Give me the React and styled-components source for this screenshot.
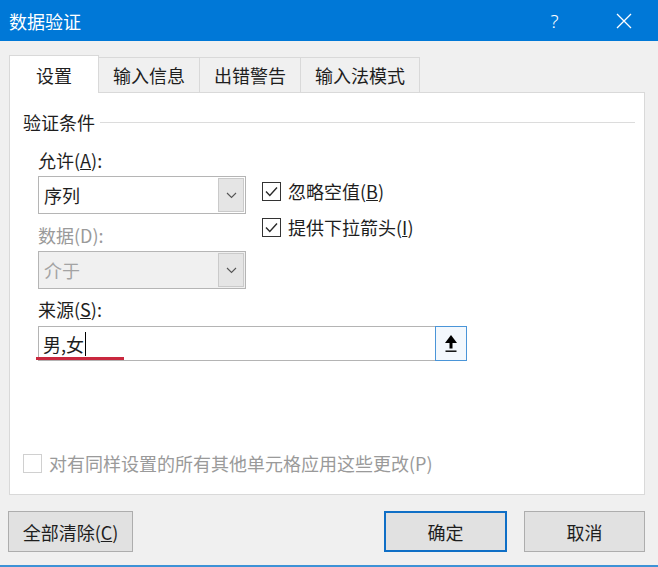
import React from 'react';
import styled, { createGlobalStyle } from 'styled-components';

const GlobalStyle = createGlobalStyle`
  html, body {
    margin: 0;
    padding: 0;
  }
  body {
    background: #f0f0f0;
    font-family: "Noto Sans CJK SC", "Noto Sans", sans-serif;
  }
`;

const Window = styled.div`
  width: 658px;
  height: 567px;
  box-sizing: border-box;
  display: flex;
  flex-direction: column;
  background: #f0f0f0;
  border-bottom: 2px solid #3d92d6;
  color: #1e1e1e;
  font-size: 18px;
  overflow: hidden;
`;

const TitleBar = styled.div`
  height: 41px;
  flex: none;
  display: flex;
  align-items: center;
  padding-left: 9px;
  background: #0078d7;
  color: #fff;
`;

const Title = styled.div`
  flex: 1;
  font-size: 18px;
  line-height: 24px;
`;

const TitleButton = styled.div`
  width: 69px;
  height: 41px;
  display: flex;
  align-items: center;
  justify-content: center;
  font-family: "Noto Sans", sans-serif;
  font-weight: 300;
  font-size: 19px;
`;

const TabStrip = styled.div`
  position: relative;
  z-index: 1;
  height: 37px;
  flex: none;
  display: flex;
  align-items: flex-end;
  margin: 14px 13px 0 9px;
`;

const Tab = styled.div`
  box-sizing: border-box;
  height: ${p => (p.$active ? '38px' : '35px')};
  margin-bottom: ${p => (p.$active ? '-1px' : '0')};
  padding: 0 ${p => (p.$active ? '26px' : '14px')};
  display: flex;
  align-items: center;
  background: ${p => (p.$active ? '#fff' : '#f0f0f0')};
  border-top: 1px solid #d9d9d9;
  border-right: 1px solid #d9d9d9;
  border-left: ${p => (p.$active ? '1px solid #d9d9d9' : 'none')};
  line-height: 24px;
  white-space: nowrap;
`;

const Panel = styled.div`
  flex: 1;
  min-height: 0;
  display: flex;
  flex-direction: column;
  margin: 0 13px 0 9px;
  padding: 17px 9px 19px 13px;
  background: #fff;
  border: 1px solid #d9d9d9;
`;

const GroupHeader = styled.div`
  display: flex;
  align-items: center;
  gap: 5px;
  line-height: 24px;
`;

const GroupRule = styled.div`
  flex: 1;
  height: 1px;
  background: #dcdcdc;
`;

const Form = styled.div`
  display: flex;
  flex-direction: column;
  margin-left: 15px;
`;

const Label = styled.div`
  line-height: 24px;
  margin-top: ${p => p.$gap}px;
  color: ${p => (p.$disabled ? '#9a9a9a' : '#1e1e1e')};
`;

const Row = styled.div`
  display: flex;
  margin-top: 4px;
`;

const LeftColumn = styled.div`
  width: 208px;
  display: flex;
  flex-direction: column;
`;

const CheckColumn = styled.div`
  display: flex;
  flex-direction: column;
  gap: 12px;
  margin-left: 16px;
  padding-top: 3px;
`;

const Select = styled.div`
  box-sizing: border-box;
  height: 38px;
  margin-top: ${p => p.$gap || 0}px;
  display: flex;
  align-items: center;
  padding: 1px;
  border: 1px solid #b5b5b5;
  background: ${p => (p.$disabled ? '#f0f0f0' : '#fff')};
  color: ${p => (p.$disabled ? '#a3a3a3' : '#1e1e1e')};
`;

const SelectValue = styled.span`
  flex: 1;
  padding-left: 4px;
  line-height: 24px;
`;

const DropButton = styled.span`
  box-sizing: border-box;
  width: 26px;
  align-self: stretch;
  display: flex;
  align-items: center;
  justify-content: center;
  background: #e5e5e5;
  border: 1px solid #cacaca;
`;

const CheckRow = styled.label`
  display: flex;
  align-items: center;
  gap: 7px;
  line-height: 24px;
  white-space: nowrap;
  color: ${p => (p.$disabled ? '#9a9a9a' : '#1e1e1e')};
`;

const CheckBox = styled.span`
  box-sizing: border-box;
  width: 19px;
  height: 19px;
  flex: none;
  display: flex;
  align-items: center;
  justify-content: center;
  background: #fff;
  border: 1px solid ${p => (p.$disabled ? '#d0d0d0' : '#333')};
`;

const SourceField = styled.div`
  position: relative;
  box-sizing: border-box;
  width: 429px;
  height: 35px;
  margin-top: 5px;
  display: flex;
  align-items: center;
  background: #fff;
  border: 1px solid #b4b4b4;
`;

const SourceText = styled.span`
  flex: 1;
  display: flex;
  align-items: center;
  padding-left: 4px;
  line-height: 24px;
`;

const Caret = styled.span`
  width: 1px;
  height: 24px;
  margin-left: 1px;
  background: #000;
`;

const RefButton = styled.span`
  box-sizing: border-box;
  width: 32px;
  align-self: stretch;
  margin: -1px -1px -1px 0;
  display: flex;
  align-items: center;
  justify-content: center;
  background: #f3f8fd;
  border: 1px solid #4a95d8;
`;

const RedMark = styled.span`
  position: absolute;
  left: -3px;
  bottom: 0;
  width: 88px;
  height: 3px;
  background: #c9283e;
`;

const Spacer = styled.div`
  flex: 1;
`;

const Footer = styled.div`
  flex: none;
  display: flex;
  padding: 16px 13px 13px 8px;
`;

const Button = styled.button`
  box-sizing: border-box;
  width: ${p => p.$width}px;
  height: 41px;
  margin-left: ${p => (p.$push ? 'auto' : p.$gap ? `${p.$gap}px` : '0')};
  padding: 0;
  font: inherit;
  font-size: 18px;
  color: #1e1e1e;
  background: #e1e1e1;
  border: ${p => (p.$primary ? '2px solid #0f6fc6' : '1px solid #adadad')};
`;

const Chevron = () => (
  <svg width="11" height="7" viewBox="0 0 11 7">
    <polyline points="1,1 5.5,5.5 10,1" fill="none" stroke="#555" strokeWidth="1.1" />
  </svg>
);

const Tick = () => (
  <svg width="15" height="15" viewBox="0 0 15 15">
    <polyline points="2,7.5 5.8,11.5 13,3.5" fill="none" stroke="#2a2a2a" strokeWidth="1.4" />
  </svg>
);

const CloseIcon = () => (
  <svg width="16" height="16" viewBox="0 0 16 16">
    <path d="M1 1 L15 15 M15 1 L1 15" stroke="#fff" strokeWidth="1.3" />
  </svg>
);

// collapse-dialog button: arrow pointing up onto a bar
const CollapseIcon = () => (
  <svg width="16" height="20" viewBox="0 0 16 20">
    <polygon points="8,1 14,9 2,9" fill="#000" />
    <rect x="6.5" y="8.5" width="3" height="6" fill="#000" />
    <rect x="2.5" y="16.5" width="11" height="1.4" fill="#000" />
  </svg>
);

const tabs = ['设置', '输入信息', '出错警告', '输入法模式'];

export default function App() {
  return (
    <Window>
      <GlobalStyle />
      <TitleBar>
        <Title>数据验证</Title>
        <TitleButton>?</TitleButton>
        <TitleButton><CloseIcon /></TitleButton>
      </TitleBar>

      <TabStrip>
        {tabs.map((t, i) => (
          <Tab key={t} $active={i === 0}>{t}</Tab>
        ))}
      </TabStrip>

      <Panel>
        <GroupHeader>
          <span>验证条件</span>
          <GroupRule />
        </GroupHeader>

        <Form>
          <Label $gap={14}>允许(<u>A</u>):</Label>
          <Row>
            <LeftColumn>
              <Select>
                <SelectValue>序列</SelectValue>
                <DropButton><Chevron /></DropButton>
              </Select>
              <Label $gap={9} $disabled>数据(D):</Label>
              <Select $disabled $gap={4}>
                <SelectValue>介于</SelectValue>
                <DropButton><Chevron /></DropButton>
              </Select>
            </LeftColumn>
            <CheckColumn>
              <CheckRow>
                <CheckBox><Tick /></CheckBox>
                <span>忽略空值(<u>B</u>)</span>
              </CheckRow>
              <CheckRow>
                <CheckBox><Tick /></CheckBox>
                <span>提供下拉箭头(<u>I</u>)</span>
              </CheckRow>
            </CheckColumn>
          </Row>
          <Label $gap={8}>来源(<u>S</u>):</Label>
          <SourceField>
            <SourceText>男,女<Caret /></SourceText>
            <RefButton><CollapseIcon /></RefButton>
            <RedMark />
          </SourceField>
        </Form>

        <Spacer />

        <CheckRow $disabled>
          <CheckBox $disabled />
          <span>对有同样设置的所有其他单元格应用这些更改(P)</span>
        </CheckRow>
      </Panel>

      <Footer>
        <Button $width={125}>全部清除(<u>C</u>)</Button>
        <Button $width={123} $push $primary>确定</Button>
        <Button $width={121} $gap={17}>取消</Button>
      </Footer>
    </Window>
  );
}
